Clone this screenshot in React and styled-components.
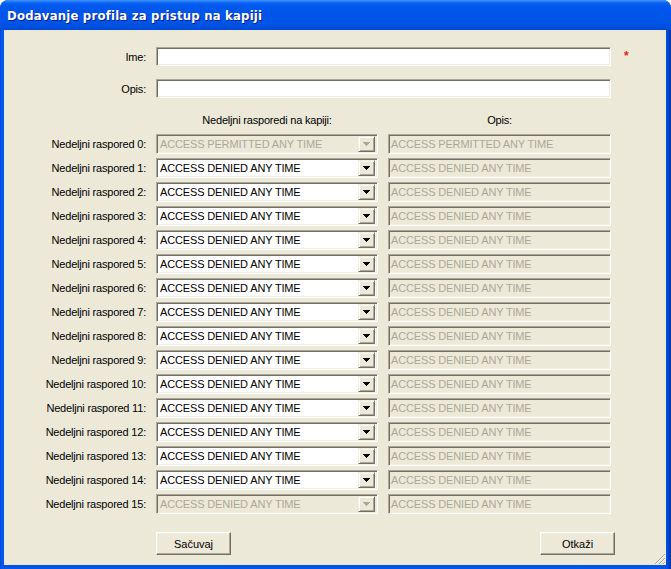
import React from "react";
import styled, { createGlobalStyle } from "styled-components";

const Global = createGlobalStyle`
  html, body { margin: 0; padding: 0; background: #ffffff; }
  #root { width: 671px; height: 569px; }
`;

const Window = styled.div`
  width: 671px;
  height: 569px;
  box-sizing: border-box;
  display: flex;
  flex-direction: column;
  background: linear-gradient(90deg, #0044d8 0px, #0a5cf0 2px, #0055ea 4px, #0055ea 665px, #0048d9 668px, #00309c 671px);
  border-radius: 8px 8px 0 0;
  overflow: hidden;
  font-family: Tahoma, "Liberation Sans", Arial, sans-serif;
`;

const TitleBar = styled.div`
  height: 30px;
  flex: none;
  display: flex;
  align-items: center;
  padding: 0 0 0 7px;
  background: linear-gradient(180deg, #3d95ff 0px, #0b62f4 3px, #0058ee 6px, #0155ea 14px, #0155e6 22px, #0050df 27px, #0047d4 30px);
  border-radius: 8px 8px 0 0;
`;

const Title = styled.span`
  color: #ffffff;
  font-family: "DejaVu Sans Condensed", "Liberation Sans", sans-serif;
  font-weight: bold;
  font-size: 13px;
  letter-spacing: 0.2px;
  text-shadow: 1px 1px 0 #0a1e8c;
`;

const Body = styled.div`
  flex: 1;
  margin: 0 5px 4px 4px;
  background: #ece9d8;
  padding: 17px 0 0 0;
  box-sizing: border-box;
  display: flex;
  flex-direction: column;
  position: relative;
  color: #000;
  font-size: 11px;
`;

const Grid = styled.div`
  display: grid;
  grid-template-columns: 142px 222px 223px auto;
  column-gap: 10px;
  align-items: center;
`;

const TopRow = styled(Grid)`
  height: 19px;
  margin-bottom: ${(p) => p.$mb || 0}px;
`;

const Label = styled.div`
  text-align: right;
  white-space: nowrap;
  font-family: "Liberation Sans", sans-serif;
  font-size: 11px;
  letter-spacing: -0.2px;
`;

const sunken = `
  box-sizing: border-box;
  border: 1px solid;
  border-color: #aca899 #ffffff #ffffff #aca899;
  box-shadow: inset 1px 1px 0 #716f64, inset -1px -1px 0 #f1efe2;
`;

const TextBox = styled.div`
  ${sunken}
  height: ${(p) => p.$h || 19}px;
  grid-column: ${(p) => p.$span || "auto"};
  background: ${(p) => (p.$disabled ? "#ece9d8" : "#ffffff")};
  color: ${(p) => (p.$disabled ? "#aca899" : "#000")};
  font-family: "Liberation Sans", sans-serif;
  font-size: 11px;
  letter-spacing: -0.15px;
  padding: 0 0 0 2px;
  display: flex;
  align-items: center;
  white-space: nowrap;
  overflow: hidden;
`;

const Star = styled.div`
  color: #e0201a;
  font-family: "Liberation Sans", sans-serif;
  font-weight: bold;
  font-size: 12px;
  margin-left: 3px;
  margin-top: -2px;
`;

const HeaderRow = styled(Grid)`
  height: 14px;
  margin-top: 15px;
  margin-bottom: 7px;
`;

const HeaderText = styled.div`
  grid-column: ${(p) => p.$col};
  text-align: center;
  font-family: "Liberation Sans", sans-serif;
  font-size: 11px;
  letter-spacing: -0.2px;
`;

const Rows = styled.div`
  display: flex;
  flex-direction: column;
  gap: 4px;
`;

const ScheduleRow = styled(Grid)`
  height: 20px;
`;

const Combo = styled.div`
  ${sunken}
  height: 20px;
  background: ${(p) => (p.$disabled ? "#ece9d8" : "#ffffff")};
  color: ${(p) => (p.$disabled ? "#aca899" : "#000")};
  display: flex;
  align-items: center;
  padding: 2px 2px 2px 3px;
  font-family: "Liberation Sans", sans-serif;
  font-size: 11px;
  letter-spacing: -0.15px;
`;

const ComboText = styled.span`
  flex: 1;
  white-space: nowrap;
  overflow: hidden;
`;

const ComboButton = styled.div`
  width: 17px;
  height: 16px;
  box-sizing: border-box;
  background: #ece9d8;
  border: 1px solid;
  border-color: #f1efe2 #716f64 #716f64 #f1efe2;
  box-shadow: inset 1px 1px 0 #ffffff, inset -1px -1px 0 #aca899;
  display: flex;
  align-items: center;
  justify-content: center;
  flex: none;
`;

const Footer = styled.div`
  margin-top: 18px;
  display: flex;
  justify-content: space-between;
  padding: 0 51px 0 152px;
`;

const Button = styled.button`
  width: 75px;
  height: 23px;
  box-sizing: border-box;
  background: #ece9d8;
  border: 1px solid;
  border-color: #ffffff #716f64 #716f64 #ffffff;
  box-shadow: inset -1px -1px 0 #aca899, inset 1px 1px 0 #f1efe2;
  font-family: "Liberation Sans", sans-serif;
  font-size: 11px;
  color: #000;
  padding: 0;
`;

const Grip = styled.svg`
  position: absolute;
  right: 0;
  bottom: 0;
`;

const Arrow = ({ disabled }) => (
  <svg width="7" height="4" viewBox="0 0 7 4">
    <path d="M0 0h7v1H0zM1 1h5v1H1zM2 2h3v1H2zM3 3h1v1H3z" fill={disabled ? "#aca899" : "#000"} />
  </svg>
);

const rows = Array.from({ length: 16 }, (_, i) => ({
  label: `Nedeljni raspored ${i}:`,
  value: i === 0 ? "ACCESS PERMITTED ANY TIME" : "ACCESS DENIED ANY TIME",
  disabled: i === 0 || i === 15,
}));

export default function App() {
  return (
    <>
      <Global />
      <Window>
        <TitleBar>
          <Title>Dodavanje profila za pristup na kapiji</Title>
        </TitleBar>
        <Body>
          <TopRow $mb={13}>
            <Label>Ime:</Label>
            <TextBox $span="2 / 4" />
            <Star>*</Star>
          </TopRow>
          <TopRow>
            <Label>Opis:</Label>
            <TextBox $span="2 / 4" />
          </TopRow>
          <HeaderRow>
            <HeaderText $col={2}>Nedeljni rasporedi na kapiji:</HeaderText>
            <HeaderText $col={3}>Opis:</HeaderText>
          </HeaderRow>
          <Rows>
            {rows.map((r) => (
              <ScheduleRow key={r.label}>
                <Label>{r.label}</Label>
                <Combo $disabled={r.disabled}>
                  <ComboText>{r.value}</ComboText>
                  <ComboButton>
                    <Arrow disabled={r.disabled} />
                  </ComboButton>
                </Combo>
                <TextBox $disabled $h={20}>{r.value}</TextBox>
              </ScheduleRow>
            ))}
          </Rows>
          <Footer>
            <Button>Sačuvaj</Button>
            <Button>Otkaži</Button>
          </Footer>
          <Grip width="12" height="12" viewBox="0 0 12 12">
            <path d="M11 1L1 11M11 5L5 11M11 9L9 11" stroke="#aca899" strokeWidth="1" />
            <path d="M11 2L2 11M11 6L6 11M11 10L10 11" stroke="#ffffff" strokeWidth="1" />
          </Grip>
        </Body>
      </Window>
    </>
  );
}
